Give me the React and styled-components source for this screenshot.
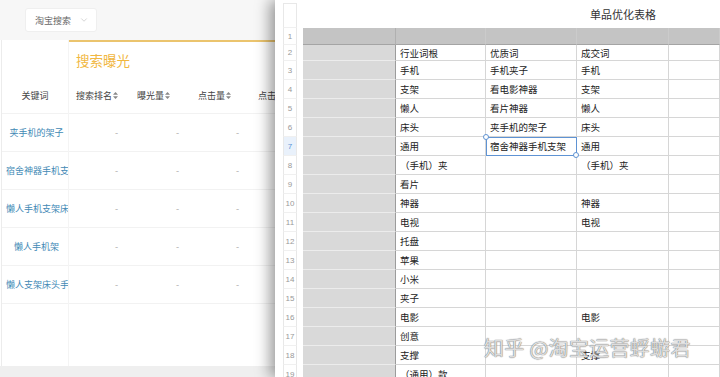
import React from 'react';
import styled, { createGlobalStyle } from 'styled-components';
import { ChevronDown } from 'lucide-react';

const Global = createGlobalStyle`
  html, body { margin: 0; padding: 0; background: #fff; }
  body { font-family: "Noto Sans CJK SC", "Noto Sans", sans-serif; }
`;

const Screen = styled.div`
  display: flex;
  width: 720px;
  height: 377px;
  overflow: hidden;
  position: relative;
`;

/* ---------- left panel ---------- */
const LeftPanel = styled.div`
  width: 275px;
  flex-shrink: 0;
  display: flex;
  flex-direction: column;
  background: #fff;
`;

const TopBar = styled.div`
  height: 40px;
  flex-shrink: 0;
  background: #f7f7f7;
  display: flex;
  align-items: center;
  padding-left: 25px;
  box-sizing: border-box;
`;

const Select = styled.div`
  width: 72px;
  height: 24px;
  box-sizing: border-box;
  background: #fff;
  border: 1px solid #efefef;
  border-radius: 3px;
  display: flex;
  align-items: center;
  justify-content: space-between;
  padding: 0 7px 0 9px;
  font-size: 9px;
  color: #666;
`;

const TableArea = styled.div`
  flex: 1;
  display: flex;
  margin-left: 1px;
  border-left: 1px solid #ececec;
  min-height: 0;
`;

const KeyColumn = styled.div`
  width: 66px;
  flex-shrink: 0;
  display: flex;
  flex-direction: column;
`;

const KeyHeader = styled.div`
  height: 74px;
  box-sizing: border-box;
  padding-top: 38px;
  display: flex;
  align-items: center;
  justify-content: center;
  font-size: 9px;
  color: #444;
  border-bottom: 1px solid #f2f2f2;
`;

const KeyCell = styled.div`
  height: 38px;
  box-sizing: border-box;
  border-bottom: 1px solid #f2f2f2;
  line-height: 37px;
  text-align: center;
  white-space: nowrap;
  overflow: hidden;
  padding: 0 1px 0 4px;
  font-size: 9px;
  color: #4189b5;
`;

const MetricArea = styled.div`
  flex: 1;
  overflow: hidden;
  border-left: 1px solid #f4f4f4;
  display: flex;
  flex-direction: column;
`;

const GroupHeader = styled.div`
  height: 38px;
  box-sizing: border-box;
  border-top: 2px solid #ebc46e;
  display: flex;
  align-items: center;
  padding-left: 7px;
  font-size: 13.5px;
  color: #f1b741;
  white-space: nowrap;
`;

const MetricRow = styled.div`
  display: grid;
  grid-template-columns: 61px 61px 60px 60px;
  height: ${p => p.$h}px;
  box-sizing: border-box;
  border-bottom: 1px solid #f2f2f2;
`;

const ColHead = styled.div`
  display: flex;
  align-items: center;
  gap: 1px;
  padding-left: 7px;
  font-size: 9px;
  color: #444;
  white-space: nowrap;
`;

const Dash = styled.div`
  text-align: right;
  padding-right: 12px;
  line-height: 37px;
  font-size: 9px;
  color: #aaa;
`;

const Footer = styled.div`
  height: 11px;
  flex-shrink: 0;
  background: #efefef;
`;

const SortIcon = () => (
  <svg width="5" height="7" viewBox="0 0 5 7">
    <path d="M2.5 0 L5 2.8 L0 2.8 Z" fill="#888" />
    <path d="M2.5 7 L5 4.2 L0 4.2 Z" fill="#888" />
  </svg>
);

/* ---------- right panel (spreadsheet) ---------- */
const RightPanel = styled.div`
  flex: 1;
  position: relative;
  z-index: 1;
  background: #fff;
  box-shadow: -5px 0 14px rgba(0, 0, 0, 0.4);
  display: flex;
  flex-direction: column;
`;

const SheetRow = styled.div`
  display: grid;
  grid-template-columns: 8px 14px 6px 93px 90px 91px 92px 1fr;
  height: ${p => p.$h}px;
  flex-shrink: 0;
`;

const RowNum = styled.div`
  grid-column: 2;
  box-sizing: border-box;
  border-left: 1px solid #e8e8e8;
  border-right: 1px solid #e8e8e8;
  border-bottom: 1px solid #f0f0f0;
  background: ${p => (p.$active ? '#e9f1fb' : '#fff')};
  color: ${p => (p.$active ? '#5b93d6' : '#999')};
  font-family: "Liberation Sans", Arial, sans-serif;
  font-size: 8px;
  display: flex;
  align-items: center;
  justify-content: center;
`;

const Corner = styled.div`
  grid-column: 2;
  margin-top: 3px;
  box-sizing: border-box;
  border: 1px solid #e8e8e8;
  border-bottom-color: #f0f0f0;
`;

const Title = styled.div`
  grid-column: 4 / -1;
  padding-left: 287px;
  display: flex;
  align-items: center;
  font-size: 11px;
  color: #333;
  white-space: nowrap;
`;

const BandCell = styled.div`
  box-sizing: border-box;
  background: #c4c4c4;
  border-bottom: 1px solid #a4a4a4;
  border-right: 1px solid ${p => (p.$first ? '#b0b0b0' : '#cbcbcb')};
`;

const ACell = styled.div`
  grid-column: 4;
  box-sizing: border-box;
  background: #d9d9d9;
  border-bottom: 1px solid #ececec;
  border-right: 1px solid #9c9c9c;
`;

const Cell = styled.div`
  position: relative;
  box-sizing: border-box;
  border-right: 1px solid #d6d6d6;
  border-bottom: 1px solid #d6d6d6;
  padding-left: 4px;
  font-size: 9.5px;
  color: #222;
  display: flex;
  align-items: center;
  white-space: nowrap;
  overflow: ${p => (p.$selected ? 'visible' : 'hidden')};
  ${p =>
    p.$selected &&
    `
    outline: 1px solid #5f93d3;
    outline-offset: -1px;
    z-index: 2;
    &::before, &::after {
      content: '';
      position: absolute;
      width: 4px;
      height: 4px;
      border: 1px solid #5f93d3;
      border-radius: 50%;
      background: #fff;
    }
    &::before { left: -3px; top: -3px; }
    &::after { right: -3px; bottom: -3px; }
  `}
`;

const Watermark = styled.div`
  position: absolute;
  left: 209px;
  top: 333px;
  font-size: 20px;
  letter-spacing: 0.3px;
  color: rgba(255, 255, 255, 0.75);
  text-shadow: 0 0 1px #777, 0 0 1px #777;
  white-space: nowrap;
  pointer-events: none;
  z-index: 3;
`;

const keywords = ['夹手机的架子', '宿舍神器手机支架', '懒人手机支架床头', '懒人手机架', '懒人支架床头手机'];

const sheetData = [
  ['手机', '手机夹子', '手机'],
  ['支架', '看电影神器', '支架'],
  ['懒人', '看片神器', '懒人'],
  ['床头', '夹手机的架子', '床头'],
  ['通用', '宿舍神器手机支架', '通用'],
  ['（手机）夹', '', '（手机）夹'],
  ['看片', '', ''],
  ['神器', '', '神器'],
  ['电视', '', '电视'],
  ['托盘', '', ''],
  ['苹果', '', ''],
  ['小米', '', ''],
  ['夹子', '', ''],
  ['电影', '', '电影'],
  ['创意', '', ''],
  ['支撑', '', '支撑'],
  ['（通用）款', '', ''],
];

export default function App() {
  return (
    <>
      <Global />
      <Screen>
        <LeftPanel>
          <TopBar>
            <Select>
              <span>淘宝搜索</span>
              <ChevronDown size={10} color="#bbb" strokeWidth={1.5} />
            </Select>
          </TopBar>
          <TableArea>
            <KeyColumn>
              <KeyHeader>关键词</KeyHeader>
              {keywords.map(k => (
                <KeyCell key={k}>{k}</KeyCell>
              ))}
            </KeyColumn>
            <MetricArea>
              <GroupHeader>搜索曝光</GroupHeader>
              <MetricRow $h={36}>
                <ColHead>搜索排名<SortIcon /></ColHead>
                <ColHead>曝光量<SortIcon /></ColHead>
                <ColHead>点击量<SortIcon /></ColHead>
                <ColHead>点击率<SortIcon /></ColHead>
              </MetricRow>
              {keywords.map(k => (
                <MetricRow key={k} $h={38}>
                  <Dash>-</Dash>
                  <Dash>-</Dash>
                  <Dash>-</Dash>
                  <Dash>-</Dash>
                </MetricRow>
              ))}
            </MetricArea>
          </TableArea>
          <Footer />
        </LeftPanel>

        <RightPanel>
          <SheetRow $h={28}>
            <Corner />
            <Title>单品优化表格</Title>
          </SheetRow>
          <SheetRow $h={17}>
            <RowNum>1</RowNum>
            <BandCell style={{ gridColumn: 4 }} $first />
            <BandCell />
            <BandCell />
            <BandCell />
            <BandCell />
          </SheetRow>
          <SheetRow $h={16}>
            <RowNum>2</RowNum>
            <ACell />
            <Cell>行业词根</Cell>
            <Cell>优质词</Cell>
            <Cell>成交词</Cell>
            <Cell />
          </SheetRow>
          {sheetData.map((r, i) => {
            const n = i + 3;
            return (
              <SheetRow key={n} $h={19}>
                <RowNum $active={n === 7}>{n}</RowNum>
                <ACell />
                <Cell>{r[0]}</Cell>
                <Cell $selected={n === 7}>{r[1]}</Cell>
                <Cell>{r[2]}</Cell>
                <Cell />
              </SheetRow>
            );
          })}
          <Watermark>知乎 @淘宝运营蜉蝣君</Watermark>
        </RightPanel>
      </Screen>
    </>
  );
}
